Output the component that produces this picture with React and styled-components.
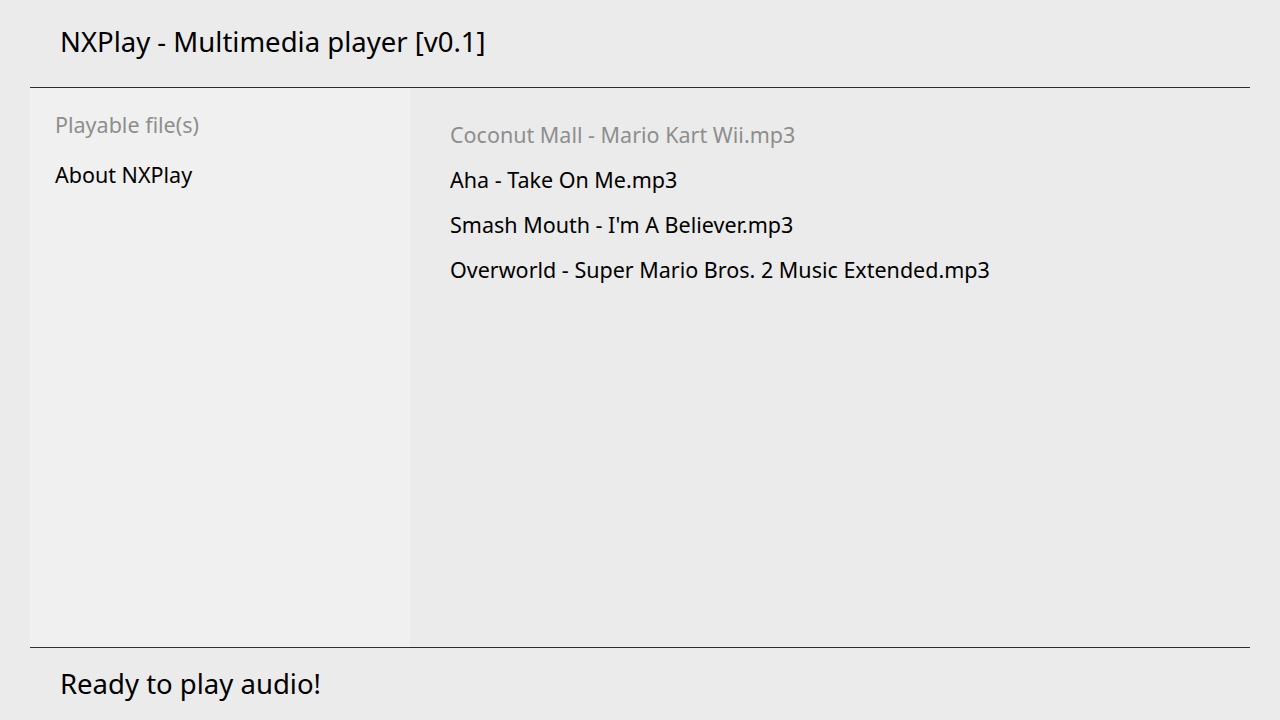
import React from 'react';
import styled, { createGlobalStyle } from 'styled-components';

const GlobalStyle = createGlobalStyle`
  html, body {
    margin: 0;
    padding: 0;
    background: #ebebeb;
  }
  body {
    font-family: "Noto Sans", "Open Sans", sans-serif;
    color: #000;
  }
`;

const Layout = styled.div`
  display: flex;
  flex-direction: column;
  width: 1280px;
  height: 720px;
  background: #ebebeb;
  overflow: hidden;
`;

const Header = styled.header`
  height: 88px;
  flex-shrink: 0;
  display: flex;
  align-items: center;
  margin: 0 30px;
  padding: 0 0 5px 30px;
  border-bottom: 1px solid #2d2d2d;
  box-sizing: border-box;
  font-size: 27.5px;
`;

const Body = styled.div`
  flex: 1;
  display: flex;
  margin: 0 30px;
  min-height: 0;
`;

const Sidebar = styled.nav`
  width: 380px;
  background: #f0f0f0;
  padding: 12px 0 0 25px;
  box-sizing: border-box;
  display: flex;
  flex-direction: column;
`;

const SideItem = styled.div`
  height: 50px;
  line-height: 50px;
  font-size: 21.5px;
  color: ${(p) => (p.$dim ? '#8e8e8e' : '#000')};
`;

const Content = styled.main`
  flex: 1;
  padding: 24px 0 0 40px;
  display: flex;
  flex-direction: column;
`;

const FileItem = styled.div`
  height: 45px;
  line-height: 45px;
  font-size: 21.5px;
  color: ${(p) => (p.$dim ? '#8e8e8e' : '#000')};
`;

const Footer = styled.footer`
  height: 73px;
  flex-shrink: 0;
  margin: 0 30px;
  padding: 0 0 1px 30px;
  border-top: 1px solid #2d2d2d;
  box-sizing: border-box;
  display: flex;
  align-items: center;
  font-size: 27.5px;
`;

const files = [
  'Coconut Mall - Mario Kart Wii.mp3',
  'Aha - Take On Me.mp3',
  "Smash Mouth - I'm A Believer.mp3",
  'Overworld - Super Mario Bros. 2 Music Extended.mp3',
];

export default function App() {
  return (
    <>
      <GlobalStyle />
      <Layout>
        <Header>NXPlay - Multimedia player [v0.1]</Header>
        <Body>
          <Sidebar>
            <SideItem $dim>Playable file(s)</SideItem>
            <SideItem>About NXPlay</SideItem>
          </Sidebar>
          <Content>
            {files.map((f, i) => (
              <FileItem key={f} $dim={i === 0}>{f}</FileItem>
            ))}
          </Content>
        </Body>
        <Footer>Ready to play audio!</Footer>
      </Layout>
    </>
  );
}
